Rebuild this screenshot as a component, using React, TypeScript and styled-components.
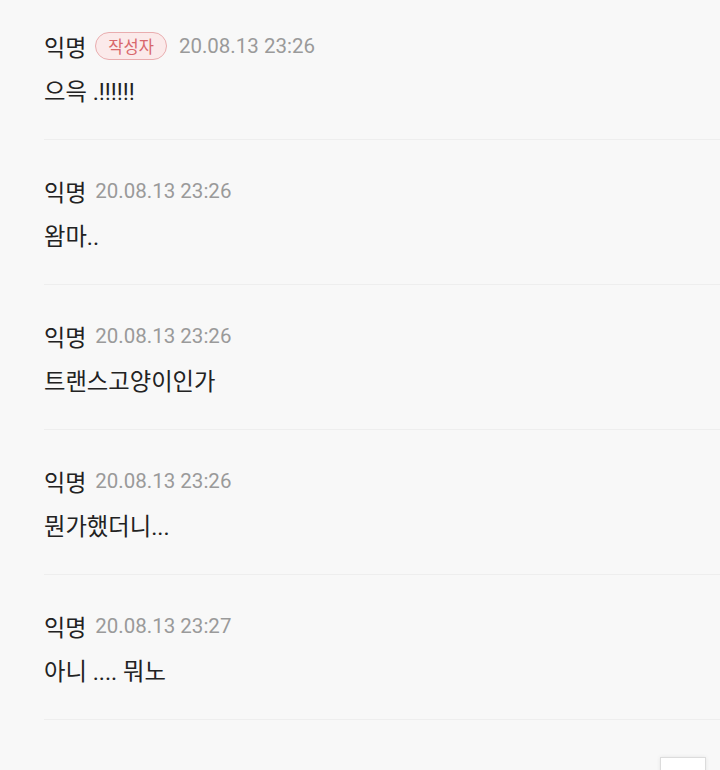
import React from "react";
import styled, { createGlobalStyle } from "styled-components";

const Global = createGlobalStyle`
  html, body { margin: 0; padding: 0; background: #f8f8f8; }
  body { font-family: "Roboto", "Noto Sans CJK KR", sans-serif; overflow: hidden; }
`;

const Page = styled.div`
  width: 720px;
  height: 770px;
  overflow: hidden;
  background: #f8f8f8;
`;

const List = styled.div`
  margin-left: 44px;
  margin-top: -5px;
  display: flex;
  flex-direction: column;
`;

const Item = styled.div`
  height: 145px;
  box-sizing: border-box;
  padding-top: 36px;
  border-bottom: 1px solid #eeeeee;
  display: flex;
  flex-direction: column;
  gap: 16px;
`;

const Header = styled.div`
  display: flex;
  align-items: center;
  gap: 9px;
  height: 30px;
`;

const Name = styled.span`
  font-family: "Noto Sans CJK KR", sans-serif;
  font-size: 23px;
  line-height: 30px;
  color: #222;
`;

const Badge = styled.span`
  font-family: "Noto Sans CJK KR", sans-serif;
  font-size: 16.5px;
  line-height: 26px;
  height: 26px;
  padding: 0 12px;
  border: 1px solid #e9adaf;
  background: #fbeaea;
  color: #d8676b;
  border-radius: 14px;
  margin-right: 3px;
`;

const DateText = styled.span`
  font-family: "Roboto", sans-serif;
  font-size: 20.5px;
  line-height: 30px;
  color: #9a9a9a;
`;

const Body = styled.div`
  font-family: "Roboto", "Noto Sans CJK KR", sans-serif;
  font-size: 23.3px;
  line-height: 30px;
  color: #222;
`;

const Footer = styled.div`
  display: flex;
  justify-content: flex-end;
  padding: 37px 14px 0 0;
`;

const TopButton = styled.div`
  width: 44px;
  height: 44px;
  background: #fff;
  border: 1px solid #dcdcdc;
  box-shadow: 0 0 4px rgba(0, 0, 0, 0.08);
`;

const comments = [
  { date: "20.08.13 23:26", text: "으윽 .!!!!!!", author: true },
  { date: "20.08.13 23:26", text: "왐마..", author: false },
  { date: "20.08.13 23:26", text: "트랜스고양이인가", author: false },
  { date: "20.08.13 23:26", text: "뭔가했더니...", author: false },
  { date: "20.08.13 23:27", text: "아니 .... 뭐노", author: false },
];

export default function App() {
  return (
    <Page>
      <Global />
      <List>
        {comments.map((c, i) => (
          <Item key={i}>
            <Header>
              <Name>익명</Name>
              {c.author && <Badge>작성자</Badge>}
              <DateText>{c.date}</DateText>
            </Header>
            <Body>{c.text}</Body>
          </Item>
        ))}
      </List>
      <Footer>
        <TopButton />
      </Footer>
    </Page>
  );
}
